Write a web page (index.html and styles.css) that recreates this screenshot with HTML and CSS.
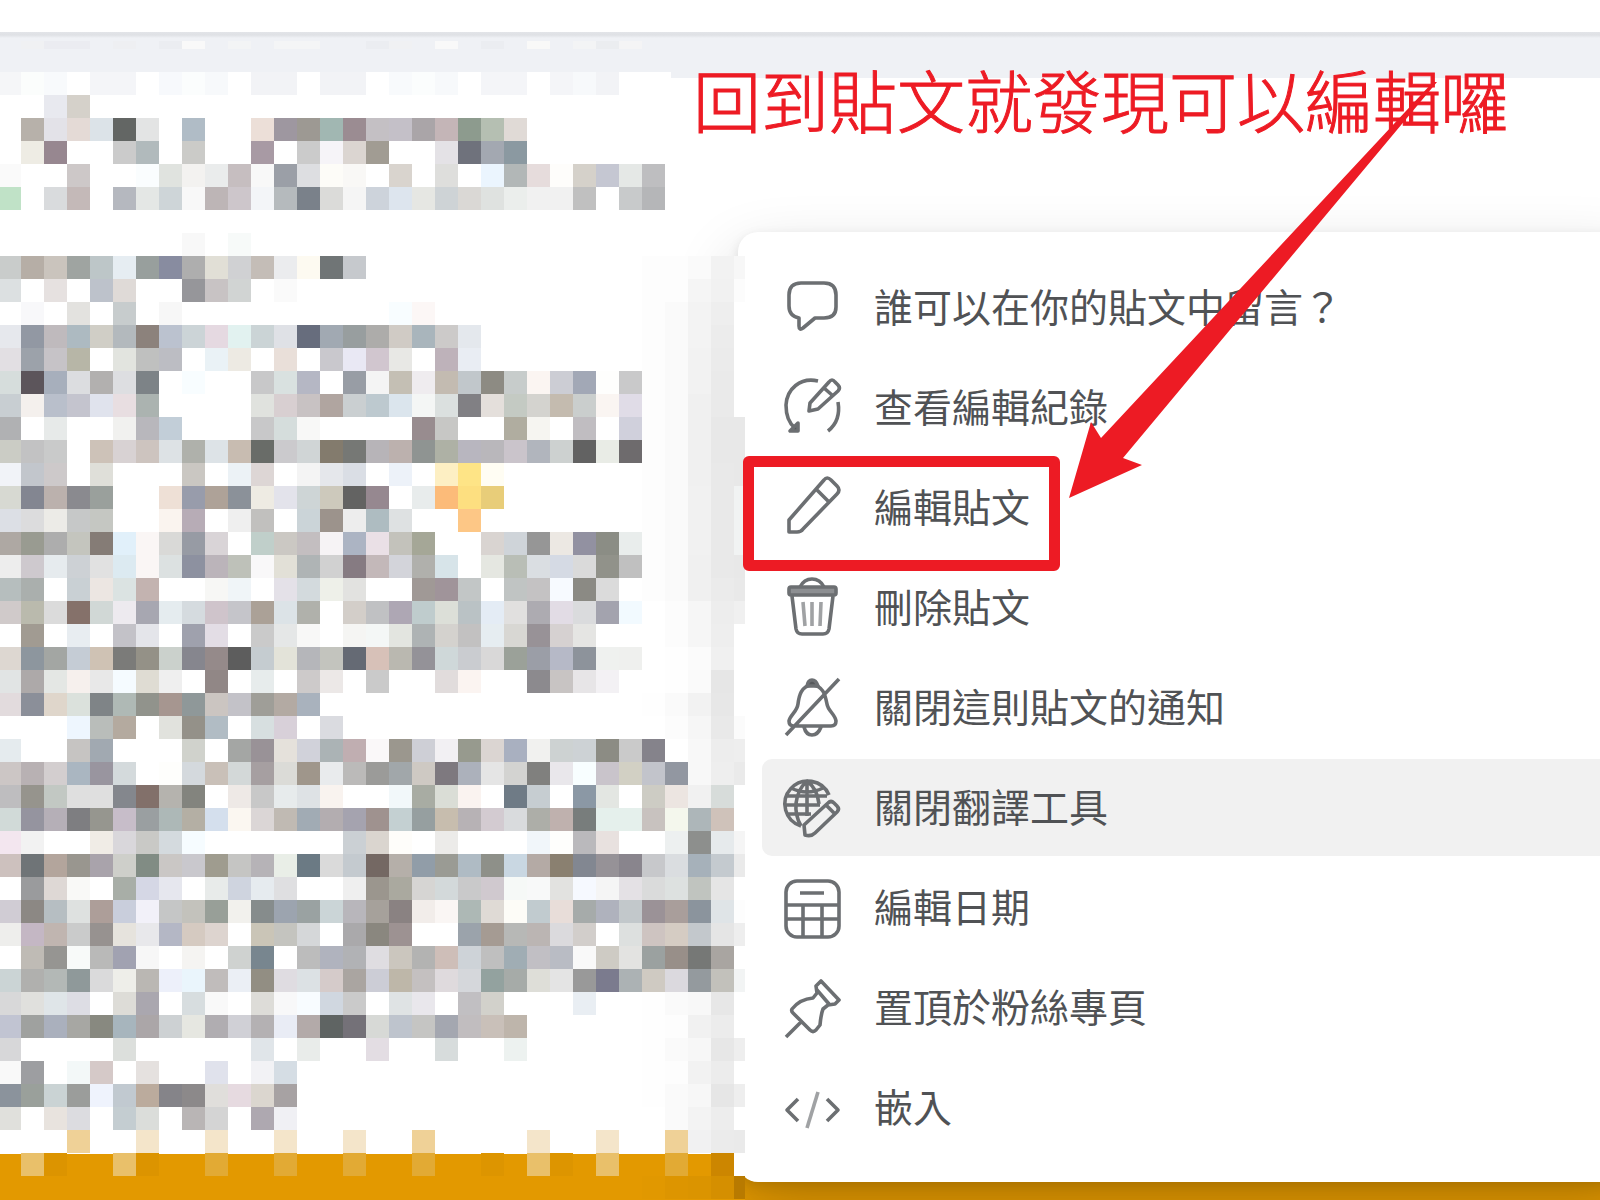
FILE: index.html
```
<!DOCTYPE html>
<html lang="zh-Hant">
<head>
  <meta charset="UTF-8" />
  <meta name="viewport" content="width=device-width, initial-scale=1.0" />
  <title>編輯貼文</title>
  <link rel="stylesheet" href="styles.css">
</head>
<body>

  <header class="topbar"></header>
  <div class="band"></div>

  <main>
    <div class="photo"></div>

    <nav class="menu" aria-label="貼文選項">
      <button class="item">
        <svg viewBox="0 0 60 60"><path d="M19 5H42Q54 5 54 17V29Q54 40 42 40H33L21 50Q17 53 17 48V40Q7 38 7 28V17Q7 5 19 5Z"/></svg>
        <span>誰可以在你的貼文中留言？</span>
      </button>
      <button class="item">
        <svg viewBox="0 0 60 60"><path d="M36 3C18-1 5 11 4 27C4 38 8 46 13 50M56 24C58 36 55 46 46 53"/><path class="solid" d="M8 53H16V45Z"/><path d="M27 33L28 25L47 4Q50 0 53 4L56 7Q59 10 56 13L36 31Z M42 10L50 17"/></svg>
        <span>查看編輯紀錄</span>
      </button>
      <button class="item">
        <svg viewBox="0 0 60 60"><path d="M7 54V42L42 2Q45-2 49 2L55 8Q59 12 55 16L21 51Q19 54 15 54Z M34 11L47 24"/></svg>
        <span>編輯貼文</span>
        <i class="mark"></i>
      </button>
      <button class="item">
        <svg viewBox="0 0 60 60"><path d="M18 9Q22 1 30 1T42 9"/><rect class="lid" x="7" y="9" width="47" height="8" rx="2"/><path d="M10 18L14 51Q15 56 20 56H41Q46 56 47 51L51 18"/><path class="soft" d="M21 24L23 48M30 24V48M39 24L38 48"/></svg>
        <span>刪除貼文</span>
      </button>
      <button class="item">
        <svg viewBox="0 0 60 60"><path d="M30 7C19 8 17 18 16 26C15 34 8 37 7 43Q7 48 12 48H49Q54 48 54 43C53 36 46 33 45 26C43 16 41 8 30 7Z M22 49Q24 57 30 57T39 49M4 57L57 1"/><path class="solid" d="M25 8Q26 2 30 2T36 8Z"/></svg>
        <span>關閉這則貼文的通知</span>
      </button>
      <button class="item active">
        <svg viewBox="0 0 60 60"><path d="M19 48A23 23 0 1 1 47 17M19 48C11 34 12 15 25 3C33 9 36 16 37 26M5 18H45M3 27H38M5 36H29M25 3V38M9 10Q25 18 41 10"/><path d="M23 57L22 47L46 25Q49 22 52 25L55 28Q58 31 55 34L33 55Q29 59 23 57Z M44 27L52 35"/></svg>
        <span>關閉翻譯工具</span>
      </button>
      <button class="item">
        <svg viewBox="0 0 60 60"><rect x="4" y="3" width="53" height="56" rx="11"/><path d="M4 27H57M4 41H57M21 27V59M40 27V59M18 15H42"/></svg>
        <span>編輯日期</span>
      </button>
      <button class="item">
        <svg viewBox="0 0 60 60"><path d="M4 59L20 43M10 31Q18 21 31 20L35 15L34 8L39 3L57 22L53 26L46 27L41 31Q39 36 38 47L34 52Q31 55 28 52L11 35Q9 33 10 31Z M35 12L47 26"/></svg>
        <span>置頂於粉絲專頁</span>
      </button>
      <button class="item">
        <svg viewBox="0 0 60 60"><path d="M16 21L5 32L16 43M45 21L56 32L45 43"/><path class="soft" d="M36 14L25 50"/></svg>
        <span>嵌入</span>
      </button>
    </nav>

    <svg class="mosaic" id="mosaic" viewBox="0 0 745 1159"></svg>

    <p class="note">回到貼文就發現可以編輯囉</p>
    <svg class="arrow" viewBox="0 0 368 416"><path d="M364 0L368 0L54 376L73 383L0 416L22 340L32 356Z"/></svg>
  </main>

  <script src="script.js"></script>
</body>
</html>
```
FILE: styles.css
```
body {
  margin: 0;
  min-height: 100vh;
  display: flex;
  flex-direction: column;
  overflow: hidden;
  background: #fff;
  font-family: "Noto Sans CJK TC", "Liberation Sans", sans-serif;
}

.topbar {
  height: 32px;
  background: #fff;
}

.band {
  height: 46px;
  background: linear-gradient(#e2e4e8, #dfe1e5 3px, #eff1f5 6px);
}

main {
  position: relative;
  flex: 1;
}

/* orange picture under the post */
.photo {
  position: absolute;
  left: 0;
  right: 0;
  bottom: 0;
  height: 46px;
  background: #e39900;
}

.menu {
  position: relative;
  display: flex;
  flex-direction: column;
  gap: 3px;
  margin: 154px -40px 18px 738px;
  padding: 27px 24px 26px;
  background: #fff;
  border-radius: 20px;
  box-shadow: 0 28px 66px rgba(0, 0, 0, 0.2), 0 4px 12px rgba(0, 0, 0, 0.1);
}

.item {
  position: relative;
  display: flex;
  align-items: center;
  gap: 31px;
  height: 97px;
  padding: 0 20px;
  border: 0;
  border-radius: 10px;
  background: none;
  color: #505255;
  font-family: inherit;
  font-size: 39px;
  line-height: 56px;
  text-align: left;
}

.item.active {
  background: #f1f1f1;
}

.item span {
  padding: 0 0 6px 1px;
}

.item svg {
  width: 60px;
  height: 60px;
  overflow: visible;
  fill: none;
  stroke: #6c6f72;
  stroke-width: 3.6;
  stroke-linejoin: round;
}

.item .solid {
  fill: #55585b;
}

.item .lid {
  fill: #8d8f92;
}

.item .soft {
  stroke: #a0a2a4;
}

/* red annotations */
.mark {
  position: absolute;
  z-index: 1;
  left: -19px;
  top: -3px;
  width: 295px;
  height: 93px;
  border: 11px solid #ed1b24;
  border-radius: 6px;
}

.note {
  position: absolute;
  left: 693px;
  top: -17px;
  margin: 0;
  color: #ed1b24;
  font-size: 68px;
  font-weight: 300;
  line-height: 76px;
  white-space: nowrap;
  -webkit-text-stroke: 1px #ed1b24;
}

.arrow {
  position: absolute;
  left: 1069px;
  top: 4px;
  width: 368px;
  height: 416px;
  fill: #ed1b24;
}

.mosaic {
  position: absolute;
  left: 0;
  top: -37px;
  width: 745px;
  height: 1159px;
  shape-rendering: crispEdges;
}
```
FILE: script.js
```
// one line per row of tiles, "." leaves the tile blank, "x*n" repeats a tile
const rows = `
f5f6f8 fbfdfc f8fafc . f4f5f8*2 . f7f9fc fbfdfd f7f9fb . f2f3f6*2 . f2f3f6*2 . f8fafc fbfdfd f7f9fb . f4f5f8*2 . f4f5f8 f7f9fb f2f3f6
. . e8e9ef d5d1ca
. b7b1aa e3e2e8 e4dad6 dce3e8 636664 e3e4e4 . b0bcc6 . . ecdfd8 9e97a0 9d9993 a1b7b2 9b8c92 c4c0c4 c4c0c8 aaa5a8 c4b5b7 8d9b8e b5bfb2 e0dad6
. eeece4 978790 . . cbcbcb b1babc . cbcbc8 . . a89aa4 . cbcbcb f6f4f8 dbd5d1 a19c93 . . e4e2e6 6f727c a3a8b1 8b99a1
fafafa . . cdc8c8 . . fafdfe e0e3df f3f2f0 eaecec c6bec0 f8f8f8 9b9fa7 dddee1 fdfcf8 f9f8f6 . d9d4ce . dededc . ebf5fe b2b7b7 e6dcdc fefdfb d5d1ca c5c7d2 e5e8e6 bebec0
c0e2c7 . d9dbdd c4b9b8 . b5b8bf e4e7e5 ced5d8 f8f8f8 bdb5b6 cdc6cb f3f5f8 b5babd 7a818a dbdbd9 f5f5f5 cdd3db dde5ee e6e7e3 ced3d6 dad8d5 dfe2e0 ebeeec f1f1f1*2 c0c0c0 . c8cacb b5b6b8
.
. . . . . . . . f8f8f8 . f7faf9
c9cccb b6aea6 cac4bd 9fa4a1 bdc6c8 e6edf2 989f9d 888ca0 aeaeae e1dfd6 d0d1d3 c4bdb7 ebecee fdfaf1 707576 c6c9cd . . . . . . . . . . . . fdfdfd*2 fafafa f2f2f2 f7f7f7
dce0e1 . e6e1e0 . bdc2cb dfdad7 . . 96969a c8c3c4 d1d4d3 . fafafa . . . . . . . . . . . . . . . fdfdfd*2 f5f5f5 f1f1f1 fcfcfc
. f8f8fa . e3e2df . c7cccd . f7f7f7 . . . . . . . . . f8fdff fcf7f6 . . . . . . . . . fdfdfd fafafa f3f3f3 eeeeee .
e6e8ed 9298a3 bfbabd adbac1 d0cec6 b3b9bd 8c827c bbc2cf ccd4d7 e5d9e1 e2f2f0 cbd4d6 dfe1e6 676d7d a1a9b2 989e9f adacaa d0cbc5 a9b5bc cccac9 e4e8ed . . . . . . . fdfdfd fafafa f3f3f3 ececec .
e2dfe3 9ca2aa c6c3c7 b7b6a7 . e2e4df bfc0bf bcbdc3 . eaf2f6 edeae3 . e9dfd9 . c9c8cd e9e8f4 d1c6cf e8e8e5 . beb2ba e9edf3 . . . . . . . fdfdfd fafafa f2f2f2 ebebeb .
d6dddc 5c555b a7afbc dcdde0 b2b0af dddee1 7d8387 . f8fdff . . c8c8c9 d9e1e0 b5b7c4 . 989da5 f4f4f4 c4bfb4 efecef c3bbb1 c1c7cb 8d8b83 c7cccb fbf5f2 cccdd4 a2a8b6 fefefd c9c9ca fdfdfd fafafa f2f2f2 eaeaea .
c8ced2 f4f0ed b9bfcb c4c4ce e0e3ed e8dee1 abb3b0 . . . . e0e2de d8cfd1 c8c2c3 b0a5a0 cacfd1 bdc9cf dbe5ed f4f6f5 dbe0df 818084 e4dfdb c4cac3 d4d3cf c4bbaf cacecd faf5f2 e0dce7 fdfdfd fafafa f0f0f0 eaeaea .
b0b1b3 . e7eae9 . . f1f1ef b8b7bc c2ced8 . . . c8c8c9 d5dddc f8f8f7 . . . . 988c8f c7c7c5 . . b0ada0 f6f5f1 . c0bdc1 . d0d0dc fdfdfd fafafa f0f0f0 e8e8e8 e8e8e8
cbccc5 c2c2c3 c9caca . cdc2b8 d8d2d3 cdc4bf dde2e5 afb1ab dde3e7 c8bcb1 696c68 cbcacd d0d5d6 837b6d 767875 b7b4b8 bcb1ae 8f9492 aeb1a5 b8b6bf b9b7bb cac4cb b1b5bd cdd1d0 626262 e9ece6 6e6b6d fdfdfd fafafa f0f0f0 e8e8e8 e8e8e8
f1f3f8 c2c6cc cdc9ca . dfdfd9 . . . cac7c2 . ecf2f6 ddd6d5 . f4f4f4 e5e7eb dadee5 . edf2f9 . fdefc3 fee486 fffdf3 . . . . . . fdfdfd fafafa f0f0f0 e9e9e9 e8e8e8
d7d9d2 838691 bbb1ad 8a8a8f 9aa09c . . eee0d6 989cab aea298 8b9199 eeebe3 e3e3eb ced5d6 cdc9bc 636362 968890 . e8ecec fcbb79 fddf80 e8cd79 . . . . . . fdfdfd fafafa f1f1f1 e9e9e9 f1f3f3
dcdfe5 dcdcdd ecebe7 c6c8c8 c5c7c2 . . faf4ef b7acb6 . efefef c1c0be . cbd4d8 9c938c ededed aebcc1 dee1e2 . . fdc786 . . . . . . . fdfdfd fafafa f1f1f1 e9e9e9 f1f3f3
aea8a3 999b91 adadad c4c5be 857c76 e1f0fa faf6f5 d9d9d7 979ba4 d9d4d7 . c0cfca cbc8c3 c3bec0 f6f3f5 acb4c3 eae0e6 c3c2bb a5a797 . . d9d4d1 cfd4d9 969696 ece8e3 9291a1 8b8d85 e9edec fdfdfd fafafa f1f1f1 e9e9e9 f1f3f3
ededed cec9ce e6ebee cdd1d5 e1e1e1 dceaf1 faf6f5 dce1e1 8d91a0 bbb4ba bec1b9 f9f8f9 e2e0d7 afb4b5 d1d1d1 867b82 c3b8b9 d3d4da b0b0ac d7e4e9 . e5e7e1 b9beb6 dadee2 d5dae4 dadada 91928a c0c0c0 fdfdfd fafafa f0f0f0 e9e9e9 e8e8e8
b6bebe aaafad . c9d0d4 ece6e2 dbe3e2 c3b3b0 . . f7f7f5 f0f5f8 . e4e1e8 d3dadd eef0e9 e2e2e0 . . a09996 a0949a c2c6c6 . c0c4c3 c4c2c3 f7faff 8b8a84 dbdbdb . fdfdfd fafafa f0f0f0 ebebeb e9e9e9
d0caca babaad dbdbdb 85716a d1d8d6 edeaef a7a7b1 e5ecef d5dbdf cfc4cb c5c5ca aba197 dce3e7 b0b1ab . d3cec9 c0c1c3 aea7b4 bfcccd dcdfd8 bac2c5 e4ecf5 e1e0df adabb1 e2dce5 dadbdd a3a3ae f2faff . fcfcfc f6f6f6 ededed f0f0f0
. a19b92 . e8edf1 . c3c2c8 e4e5ea . 9fa1ad e3dde5 . cacaca e5e7e7 f8f8f7 . f5f5f3 f4f7f6 e3e5e0 aeb3b4 d4d2ce c2c1c1 e6edf1 d8d7d3 989297 d6d1d1 e5e5e3 . . . fcfcfc f6f6f6 eeeeee .
ddd7d1 8d969e a3a6a3 c5ccd5 cfc2b4 7b7b79 949187 cbd1cc 86868e 958a8a 5d5d5d c5ccd0 e3e3d9 b5b6ba c3c4be 656a74 d7c1b8 bab8b0 949298 cfd8d9 caccd0 d9d8d8 9ba199 9b9ea7 b6b9c7 8d939b eff1ef eff0ee . fefefe fbfbfb f0f0f0 .
e1e4e4 ada9a9 e4e7e4 f6f0ed e8e8e8 f5fbff dfdcd3 efefef . 918786 . e7ecec . cdcaca ece8e7 . cacaca . . e1dcdc fbf4f1 . . 8c8a8e c8c4c3 e7e5e7 f3f1f4 . . fefefe fafafa e6e6e6 .
e2dbdd 8b8f99 dfd6cb dbe1dc 7f8487 afb9b5 91938c a69690 8f9899 cbc5c1 c3c2c8 9f9e98 b3aaa3 a9b2bd . . . . . . . . . . . . . . fefefe fafafa f2f2f2 e7e7e7 .
. . . eef6fe b9bdba b4aa9f . e1e2dd 949189 b1bcc4 . d7dfe0 d8d0d9 . dadbe0 . . . . . . . . . . . . . . fcfcfc f6f6f6 e9e9e9 fbfbfb
e5ebee . . c6c4c2 a1a9b1 . . . d0d2cc . a4a6a4 999297 e5e1db d1d2da abb3b5 c0aeb1 faf8f9 9b978e cecfd6 f2f0f3 979a8e dbd5d2 a9b0c0 f1f1ef cdd2d2 cdd2d5 8c8c84 cacaca 85838b . f8f8f8 ededed eeeeee
ccc6c5 b8b1b3 d3cecf aab6c1 99959f d4dadc . fefefc d4d9dd c9c0b8 d3d8d8 a69fa1 dbdbd7 9f968b e9ebed bbbab9 9b9b99 a1a7aa cec9c3 7e797f acb1bb e5e5e5 d3d3d1 80807e e9e7eb f8feff c9c4cb d2d0c4 c2c4cb 9297a1 f8f8f8 eeeeee eaeaea
bebdbf 96948d c2c8c3 dfdfdf*2 84878d 82706a b5b3ae 83847e . eee9e6 c8c8c8 e7ebec dee2e5 f9f3ef . . f2f8fa a8aca3 daddd6 faf3f0 . 6f7b86 c6cdd1 . 8b98a5 e3e6e2 . cdccc4 ece5e1 f1f1f1 d7dcda .
d1dad8 95949f b5afb7 7e7e81 96968f c7bdc9 9a9fa1 adb8b7 b4afa4 d4dfed fbf7f1 dbd6d6 c0bab3 a1abb4 b3adb0 a5a3af 9f928f c4d0d2 969fa0 c7bdae b7b2b5 d3cbd1 d9dbdd adaea8 bfb1ae 787d7c e5f0ec*2 c8c2bf f4f7ed adb6b9 cfc2ba .
f3e6ef f2f2f2 . . f0ece6 d9d7db c9c9c6 d4dade f6fcff . . . . . . cbd0d4 dad5cf fefdfa . ecebe9 . . . f1f6fa fefefc bab9bc e8e1df . . edf0f0 8d8f8d e6eaec f5f5f5
cdc1be 6f7477 b3a59c 99968f a9a3ab cecfca 818c84 cac7c5 c9c8cd 9f9c8f c5c5c3 b6b3b7 e9eee7 6b7a84 dadada c4cacf 746863 b5afa9 919da8 9a9b94 afbbc4 8e9089 c9d7e2 b4aaa5 8a8070 828791 969297 89858d c7c8cb dadde0 a6b1ba c4cacf eaeaea
. 9a9b9d ded8d5 f9f9f7 . a8aea7 d5d7e5 e6e7ee . e8ebea cfd4df e6ebef dfdfe1 . . efefef 9b968e aaa99f d6d5d3 d3d9da c9c9ca d0c9cf f6f9f7 f8f9f9 e2e2e0 f6f9ff f5f5f5 e4e1e5 dadbdb dde1e0 c0c4bf e5e5e5 .
d0ccd4 8c8884 b6bec2 dee1e0 ad9e99 c9cedc f2f1f9 c5c6c6 c3c2bc 989f98 f2f1ed 868c8c 9ca4af 9aa2a2 cbd5d7 b8b6bb a6a19b 8a8282 f2edea faf6f4 adb8b5 dfdad5 fdfcf7 c1cbcf e8ddd9 a6abaa afb2bd c2c8cb 9b9297 a99e9b 8b949d dfe4e7 fdfdfd
eeeeec c4b7c4 c0b5b0 cacbcb 979290 e6e3dd e8e8eb b4b7c5 d5cac1 ddd4cf . cac5b7 c4c4bf d5d7d9 . aaa9ab 8a877f 9d9292 . . 9ba3ab a59b93 b7b8b6 bbb5b3 dbdadd d2cecb . dde0df cec4c1 d5ccc3 c3c8cc e5e5e5 eeeeee
. bfbbb5 969592 f8faf9 b9b9b8 a1a2b1 f7f7f7 . f5f4f2 . cfd2d0 78868f . bcbcbc b0b3be b1b2b5 dfdde1 cbc6be b3b3b2 cebeb8 ced3d8 bfbfbf a0adb4 c1bfc4 b9bcc4 f9f9f9 cecbc4 e3e3e1 9ba1a0 988f89 767876 a9a5a1 .
cbd4d5 b0b0ae b3b8b6 8f999a dadadb eeeee9 bab7b3 edf0fa eaf5fc c0bcbb ebeff5 928e83 dfdce1 dce1e4 d5cbca aaa5a1 cccdd6 beb7a9 c4c0c0 dfdadd d5d7db 93a29f a6aba8 deded8 e4e4e4 999999 7b7b8e acb2b4 cfcac2 dbd9de 949a9e c2c1bb f2f4f4
d8d8d9 e0e0dd dfe5e8 dddde4 . dddcd7 aaa7af . d7dddf f9f9f9 . dddcd8 f8f8f9 f8fcff d0d7e0 cacaca . dfe3e4 e9e7ec . c1bfc2 d2d1cb . . . e9eef3 . . fefefe fafafa f8f8f8 e7e7e7 .
c1c4d2 9fa19f aab0bd a7a7a3 888980 a7b5bd aba6a8 cdd1d3 e6e7e1 b0adb1 d0d0d6 b4b1b3 e9ecf5 b3aaa9 5f6463 747178 d7d9d6 bec4cd c5c5c3 a4a7b0 c1bdbf c9c0b9 beb5ab . . . . . fefefe fdfdfd f1f1f1 ececec .
d7d7d9 . . . . dcdfdc . . . . . e0e5e9 . e9ecea . . e3dde3 . . d7dcdc . . edf2f0 . . . . . fefefe fafafa f7f7f7 e7e7e7 eeeeee
f9f9f9 9d9ea1 . f3f8f8 d5c9c8 . e5e1df . . e0e2ec . f2f2f5 d5dde4 . . . . . . . . . . . . . . . fefefe fdfdfd f2f2f2 ececec .
8b939c 9aa09b cad3d4 9b9d9b eff3fd c1c9d0 bbab9d 858489 8c898a e0dedb e6dae0 dbd6cf a7a2a3 . . . . . . . . . . . . . . . fefefe fafafa f7f7f7 e6e6e6 eeeeee
e0e0dc . e8e3de dcdce0 . c4cdd1 dbddda . b9b5b5 d4d4d4 . aea8b0 f0f0f4 . . . . . . . . . . . . . . . . fafafa f3f3f3 ededed .
. . . efd197 . . f4e5ca . . f4e5ca . . f4e5ca . . f4e5ca . . efd197 . . . . f4e5ca . . f4e5ca . . efd197 f1f1f2 ebebeb eaeaea
. e9c06a dc9400 . . e9c06a dc9400 . . e2aa34 . . e2aa34 . . e2aa34 . . e2aa34 . . dd9500 . e9c06a dd9500 . e9c06a . . e2aa34 . cc8600 ffffff
. . . . . . . . . . . . . . . . . . . . . . . . . . . . e19800 dd9500 db9400 d58f00 b87a00
`.trim().split("\n");

const TILE = 23;
const mosaic = document.getElementById("mosaic");

function rect(x, y, w, h, color) {
  const r = document.createElementNS("http://www.w3.org/2000/svg", "rect");
  r.setAttribute("x", x);
  r.setAttribute("y", y);
  r.setAttribute("width", w);
  r.setAttribute("height", h);
  r.setAttribute("fill", color);
  mosaic.appendChild(r);
}

function drawRow(line, y, h) {
  let col = 0;
  line.split(" ").forEach((token) => {
    const [color, n] = token.split("*");
    for (let i = 0; i < (n || 1); i++) {
      if (color !== ".") {
        const x = col ? 21 + (col - 1) * TILE : 0;
        rect(x, y, col ? TILE : 21, h, "#" + color);
      }
      col++;
    }
  });
}

// white paper and the orange picture below the tiles
rect(0, 31, 671, 184, "#ffffff");
rect(0, 215, 745, 898, "#ffffff");
rect(0, 1113, 745, 46, "#e39900");

drawRow(". f0f1f3 ebecf1*2 . eeeff2 . ebedf1 f9f9f9 . f3f4f5 . f4f5f6*2 . . ebedf1 f0f1f3 . f9f9f9 . ebedf1 . f9f9f8 . f3f4f5 ebedf0 f4f4f5", 0, 8);
rows.forEach((line, i) => drawRow(line, 31 + i * TILE, TILE));
```
